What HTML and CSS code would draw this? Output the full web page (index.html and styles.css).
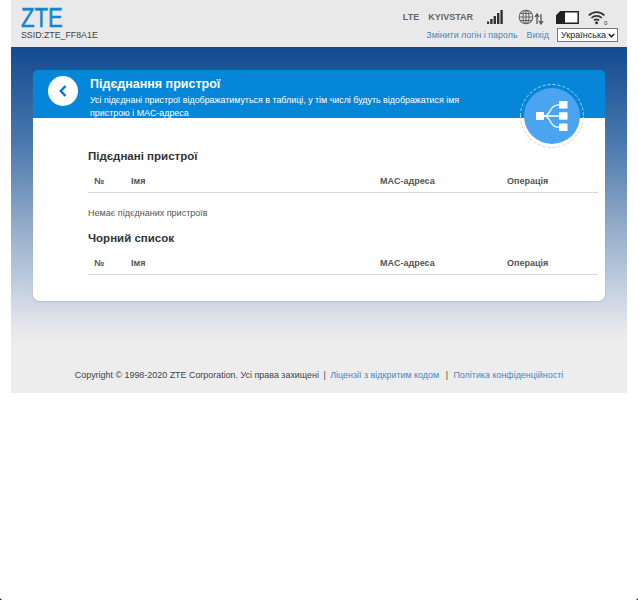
FILE: index.html
```html
<!DOCTYPE html>
<html lang="uk">
<head>
<meta charset="UTF-8">
<meta name="viewport" content="width=device-width, initial-scale=1.0">
<title>ZTE</title>
<link rel="stylesheet" href="styles.css">
</head>
<body>

<div class="wrap">
    <!-- Top bar -->
    <div class="topbar">
        <div class="brand">
            <div class="logo">ZTE</div>
            <div class="ssid">SSID:ZTE_FF8A1E</div>
        </div>
        <div class="status">
            <div class="status-icons">
                <span class="net">LTE</span>
                <span class="net op">KYIVSTAR</span>
                <svg class="ico-signal" width="16" height="16" viewBox="0 0 16 16">
                    <rect x="0" y="12.500" width="2.200" height="2.500" fill="#333"/>
                    <rect x="3.200" y="10" width="2.400" height="5" fill="#333"/>
                    <rect x="6.600" y="7" width="2.400" height="8" fill="#333"/>
                    <rect x="10" y="4" width="2.400" height="11" fill="#333"/>
                    <rect x="13.400" y="1" width="2.400" height="14" fill="#333"/>
                </svg>
                <svg class="ico-globe" width="26" height="16" viewBox="0 0 26 16">
                    <g fill="none" stroke="#666" stroke-width="1.100">
                        <circle cx="8" cy="8" r="6.800"/>
                        <ellipse cx="8" cy="8" rx="3" ry="6.800"/>
                        <path d="M8 1.200V14.800M1.200 8H14.800M2.400 4.500H13.600M2.400 11.500H13.600"/>
                    </g>
                    <path d="M19 15V6M17 8l2-3 2 3M23 5v9M21 12l2 3 2-3" fill="none" stroke="#555" stroke-width="1.300"/>
                </svg>
                <svg class="ico-batt" width="23" height="13" viewBox="0 0 23 13">
                    <path d="M4.500 .8H22.200V12.200H.8V4.500Z" fill="#fff" stroke="#222" stroke-width="1.500"/>
                    <path d="M4.500 .8H8.500V12.200H.8V4.500Z" fill="#222" stroke="#222"/>
                </svg>
                <svg class="ico-wifi" width="20" height="15" viewBox="0 0 20 15">
                    <g fill="none" stroke="#333" stroke-width="1.700">
                        <path d="M.8 5.400C5.200 1 12 1 16.400 5.400"/>
                        <path d="M3.400 8C6.400 5.200 10.800 5.200 13.800 8"/>
                        <path d="M6 10.400C7.600 9 9.600 9 11.200 10.400"/>
                    </g>
                    <circle cx="8.600" cy="12.800" r="1.500" fill="#333"/>
                    <text x="16" y="14.500" class="wifi-count">0</text>
                </svg>
            </div>
            <div class="status-links">
                <a href="#">Змінити логін і пароль</a>
                <a href="#" class="logout">Вихід</a>
                <div class="lang-box">
                    <select class="lang"><option>Українська</option></select>
                    <svg class="lang-arrow" width="7" height="5" viewBox="0 0 7 5"><path d="M.8 1 L3.500 3.800 L6.200 1" fill="none" stroke="#222" stroke-width="1.500"/></svg>
                </div>
            </div>
        </div>
    </div>

    <div class="main">
        <div class="card">
            <div class="card-head">
                <div class="back">
                    <svg width="10" height="14" viewBox="0 0 10 14"><path d="M7.500 2 L2.800 7 L7.500 12" fill="none" stroke="#0b74c4" stroke-width="2.400"/></svg>
                </div>
                <div class="card-title">
                    <h1>Підєднання пристрої</h1>
                    <p>Усі підєднані пристрої відображатимуться в таблиці, у тім числі будуть відображатися імя пристрою і MAC-адреса</p>
                </div>
                <!-- Badge hanging over the card head -->
                <div class="badge">
                    <svg class="badge-ring" width="64" height="64" viewBox="0 0 64 64">
                        <path d="M.5 32A31.500 31.500 0 0 1 63.500 32" fill="none" stroke="#a9d8f7" stroke-dasharray="3 2"/>
                        <path d="M.5 32A31.500 31.500 0 0 0 63.500 32" fill="none" stroke="#f2cdb8" stroke-dasharray="3 2"/>
                    </svg>
                    <svg width="32" height="32" viewBox="0 0 32 32">
                        <rect x="0" y="12" width="8" height="8" fill="#fff"/>
                        <rect x="23" y="1" width="8.500" height="7.500" fill="#fff"/>
                        <rect x="23" y="12.200" width="8.500" height="7.500" fill="#fff"/>
                        <rect x="23" y="23.500" width="8.500" height="7.500" fill="#fff"/>
                        <path d="M8 16H23M8 16C15 16 13 4.800 23 4.800M8 16C15 16 13 27.200 23 27.200" fill="none" stroke="#fff" stroke-width="1.300"/>
                    </svg>
                </div>
            </div>
            <div class="card-body">
                <h2>Підєднані пристрої</h2>
                <div class="row-head">
                    <span class="col-no">№</span>
                    <span class="col-name">Імя</span>
                    <span class="col-mac">MAC-адреса</span>
                    <span class="col-op">Операція</span>
                </div>
                <p class="empty">Немає підєднаних пристроїв</p>
                <h2>Чорний список</h2>
                <div class="row-head">
                    <span class="col-no">№</span>
                    <span class="col-name">Імя</span>
                    <span class="col-mac">MAC-адреса</span>
                    <span class="col-op">Операція</span>
                </div>
            </div>
        </div>
        <div class="footer">
            Copyright © 1998-2020 ZTE Corporation. Усі права захищені
            <span class="sep">|</span>
            <a href="#">Ліцензії з відкритим кодом</a>
            <span class="sep sep-wide">|</span>
            <a href="#">Політика конфіденційності</a>
        </div>
    </div>
</div>

<!-- Rounded window corners at the bottom of the shot -->
<div class="corner corner-left"></div>
<div class="corner corner-right"></div>

</body>
</html>
```

FILE: styles.css
```css
body {
    font-family: "Liberation Sans", Arial, sans-serif;
    margin: 0;
    padding: 0;
    background-color: #fff;
    color: #333;
}
a {
    color: #4a86c0;
    text-decoration: none;
}
.wrap {
    width: 616px;
    margin-left: 11px;
}
.topbar {
    height: 47px;
    background-color: #e9e9e9;
    display: flex;
    justify-content: space-between;
    box-sizing: border-box;
    padding: 0 9px 0 10px;
}
.logo {
    font-size: 27px;
    line-height: 24px;
    margin-top: 6px;
    color: #1187cf;
    -webkit-text-stroke: 0.5px #1187cf;
    transform: scaleX(0.82);
    transform-origin: left center;
}
.ssid {
    font-size: 8.800px;
    line-height: 11px;
    color: #444;
}
.status {
    display: flex;
    flex-direction: column;
    align-items: flex-end;
}
.status-icons {
    display: flex;
    align-items: center;
    height: 16px;
    margin-top: 9px;
    margin-right: 10px;
}
.net {
    font-size: 9px;
    font-weight: bold;
    color: #666;
}
.op {
    margin-left: 9px;
}
.ico-signal {
    margin-left: 14px;
}
.ico-globe {
    margin-left: 15px;
}
.ico-batt {
    margin-left: 12px;
}
.ico-wifi {
    margin-left: 9px;
}
.wifi-count {
    font-size: 6px;
    fill: #333;
}
.status-links {
    display: flex;
    align-items: center;
    font-size: 8.900px;
    margin-top: 3px;
}
.logout {
    margin-left: 9px;
}
.lang-box {
    position: relative;
    margin-left: 8px;
    height: 14px;
}
.lang {
    display: block;
    width: 61px;
    height: 14px;
    padding: 0 0 0 3px;
    font-family: "Liberation Sans", Arial, sans-serif;
    font-size: 9px;
    background-color: #fff;
    color: #222;
    border: 1px solid #777;
    border-radius: 0;
    appearance: none;
}
.lang-arrow {
    position: absolute;
    right: 3px;
    top: 5px;
}
.main {
    height: 346px;
    box-sizing: border-box;
    padding: 22px 22px 0 22px;
    border-top: 1px solid #0b4a94;
    background: linear-gradient(to bottom, #134a92 0%, #4a78ae 32%, #8fa9c8 59%, #cfd8e4 86%, #e8e8ec 96%, #ededed 100%);
    background-size: 100% 295px;
    background-repeat: no-repeat;
    background-color: #ededed;
}
.card {
    height: 231px;
    background-color: #fff;
    border-radius: 7px;
    box-shadow: 0 1px 2px rgba(120, 140, 170, 0.3);
}
.card-head {
    position: relative;
    height: 48px;
    background-color: #0586d9;
    border-radius: 5px 5px 0 0;
    display: flex;
    color: #fff;
}
.back {
    width: 30px;
    height: 30px;
    margin: 6px 0 0 15px;
    border-radius: 50%;
    background-color: #fff;
    display: flex;
    justify-content: center;
    align-items: center;
}
.card-title {
    margin-left: 12px;
    width: 385px;
}
.card-title h1 {
    margin: 7px 0 0 0;
    font-size: 12.500px;
    line-height: 15px;
    font-weight: bold;
}
.card-title p {
    margin: 2px 0 0 0;
    font-size: 8.900px;
    line-height: 13px;
}
.badge {
    position: absolute;
    left: 491px;
    top: 18px;
    width: 56px;
    height: 56px;
    border-radius: 50%;
    background-color: #4ba4ef;
    display: flex;
    justify-content: center;
    align-items: center;
}
.badge-ring {
    position: absolute;
    left: -4px;
    top: -4px;
}
.card-body {
    padding: 31px 7px 0 55px;
}
.card-body h2 {
    margin: 0;
    font-size: 11.500px;
    line-height: 14px;
    font-weight: bold;
    color: #333;
}
.row-head {
    display: flex;
    height: 23px;
    margin-top: 6px;
    align-items: center;
    border-bottom: 1px solid #d8d8d8;
    font-size: 9px;
    font-weight: bold;
    color: #555;
}
.col-no {
    width: 43px;
    padding-left: 6px;
    box-sizing: border-box;
}
.col-name {
    width: 249px;
}
.col-mac {
    width: 127px;
}
.col-op {
    flex: 1;
}
.empty {
    margin: 14px 0 12px 0;
    font-size: 9px;
    line-height: 12px;
    color: #555;
}
.footer {
    margin-top: 68px;
    text-align: center;
    font-size: 8.930px;
    line-height: 12px;
    color: #444;
}
.sep {
    margin: 0 2px;
}
.sep-wide {
    margin: 0 3px 0 4px;
}
.corner {
    position: fixed;
    bottom: 0;
    width: 3px;
    height: 3px;
}
.corner-left {
    left: 0;
    background: radial-gradient(circle at top right, transparent 2.500px, #222 3.500px);
}
.corner-right {
    right: 0;
    background: radial-gradient(circle at top left, transparent 2.500px, #222 3.500px);
}
```
